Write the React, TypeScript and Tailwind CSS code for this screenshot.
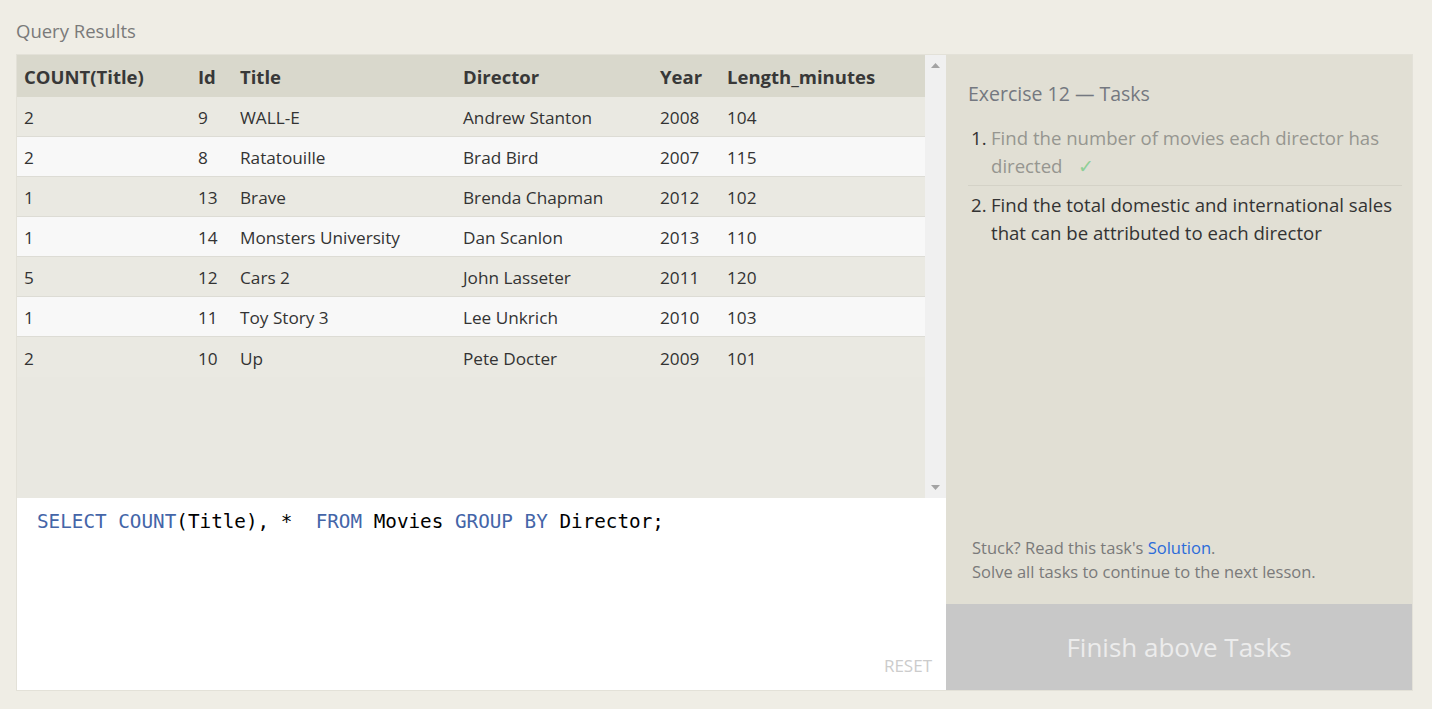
import React from "react";

const rows = [
  ["2", "9", "WALL-E", "Andrew Stanton", "2008", "104"],
  ["2", "8", "Ratatouille", "Brad Bird", "2007", "115"],
  ["1", "13", "Brave", "Brenda Chapman", "2012", "102"],
  ["1", "14", "Monsters University", "Dan Scanlon", "2013", "110"],
  ["5", "12", "Cars 2", "John Lasseter", "2011", "120"],
  ["1", "11", "Toy Story 3", "Lee Unkrich", "2010", "103"],
  ["2", "10", "Up", "Pete Docter", "2009", "101"],
];

const headers = ["COUNT(Title)", "Id", "Title", "Director", "Year", "Length_minutes"];
const widths = ["w-[174px]", "w-[42px]", "w-[223px]", "w-[197px]", "w-[67px]", "flex-1"];

const App = () => {
  return (
    <main className="min-h-[709px] w-full bg-[#efede5] pl-4 pr-[19px] pt-[19px] font-['Open_Sans','Noto_Sans',sans-serif] text-[#333]">
      <h2 className="text-[18.5px] leading-6 text-[#7a7a7a]">Query Results</h2>
      <div className="mt-[11px] flex h-[637px] border border-[#e3e1d8]">
        {/* left: results + editor */}
        <section className="flex w-[929px] flex-col">
          <div className="flex h-[443px] bg-[#e9e8e1]">
            <div className="flex-1">
              <div className="flex h-[42px] items-center bg-[#d9d8cc] pt-[2px] text-[18.5px] font-bold text-[#383838]">
                {headers.map((h, i) => (
                  <div key={h} className={`${widths[i]} pl-[7px]`}>
                    {h}
                  </div>
                ))}
              </div>
              {rows.map((r, idx) => (
                <div
                  key={idx}
                  className={`flex h-[40px] items-center pt-[3px] text-[17.2px] ${
                    idx < rows.length - 1 ? "border-b border-[#dddcd5]" : ""
                  } ${idx % 2 === 0 ? "bg-[#eae9e2]" : "bg-[#f8f8f8]"}`}
                >
                  {r.map((c, i) => (
                    <div key={i} className={`${widths[i]} pl-[7px]`}>
                      {c}
                    </div>
                  ))}
                </div>
              ))}
            </div>
            <div className="flex w-[21px] flex-col items-center justify-between bg-[#f0f0f0] py-[8px]">
              <svg width="9" height="5" viewBox="0 0 9 5">
                <polygon points="4.5,0 9,5 0,5" fill="#a3a3a3" />
              </svg>
              <svg width="9" height="5" viewBox="0 0 9 5">
                <polygon points="0,0 9,0 4.5,5" fill="#a3a3a3" />
              </svg>
            </div>
          </div>
          <div className="relative flex-1 bg-white px-[20px] pt-[10px]">
            <pre className="font-['DejaVu_Sans_Mono',monospace] text-[19.3px] text-black">
              <span className="text-[#4465a8]">SELECT</span>{" "}
              <span className="text-[#4465a8]">COUNT</span>(Title), *{"  "}
              <span className="text-[#4465a8]">FROM</span> Movies{" "}
              <span className="text-[#4465a8]">GROUP</span>{" "}
              <span className="text-[#4465a8]">BY</span> Director;
            </pre>
            <span className="absolute right-[14px] bottom-[12px] text-[17px] text-[#cccccc]">
              RESET
            </span>
          </div>
        </section>

        {/* right: tasks */}
        <aside className="flex flex-1 flex-col">
          <div className="flex flex-1 flex-col justify-between bg-[#e1dfd4] pb-[20px]">
            <div className="pl-[22px] pr-[10px] pt-[24px]">
              <h3 className="text-[19.5px] text-[#747880]">Exercise 12 — Tasks</h3>
              <ol className="mt-[16px] text-[18.6px] leading-[28px]">
                <li className="flex border-b border-[#d4d2c7] pb-[5px]">
                  <span className="w-[23px] shrink-0 pl-[3px] text-[#333]">1.</span>
                  <span className="text-[#969690]">
                    Find the number of movies each director has directed
                    <span className="ml-[16px] inline-block text-[19px] text-[#8fcf97]">✓</span>
                  </span>
                </li>
                <li className="flex pt-[5px]">
                  <span className="w-[23px] shrink-0 pl-[3px]">2.</span>
                  <span className="text-[#333]">
                    Find the total domestic and international sales that can be attributed to each director
                  </span>
                </li>
              </ol>
            </div>
            <p className="px-[26px] text-[16.5px] leading-[24px] text-[#7a7a7a]">
              Stuck? Read this task's <span className="text-[#2b6bd9]">Solution</span>.
              <br />
              Solve all tasks to continue to the next lesson.
            </p>
          </div>
          <button
            type="button"
            className="h-[86px] bg-[#c8c8c8] text-[26px] text-[#ececec]"
          >
            Finish above Tasks
          </button>
        </aside>
      </div>
    </main>
  );
};

export default App;
